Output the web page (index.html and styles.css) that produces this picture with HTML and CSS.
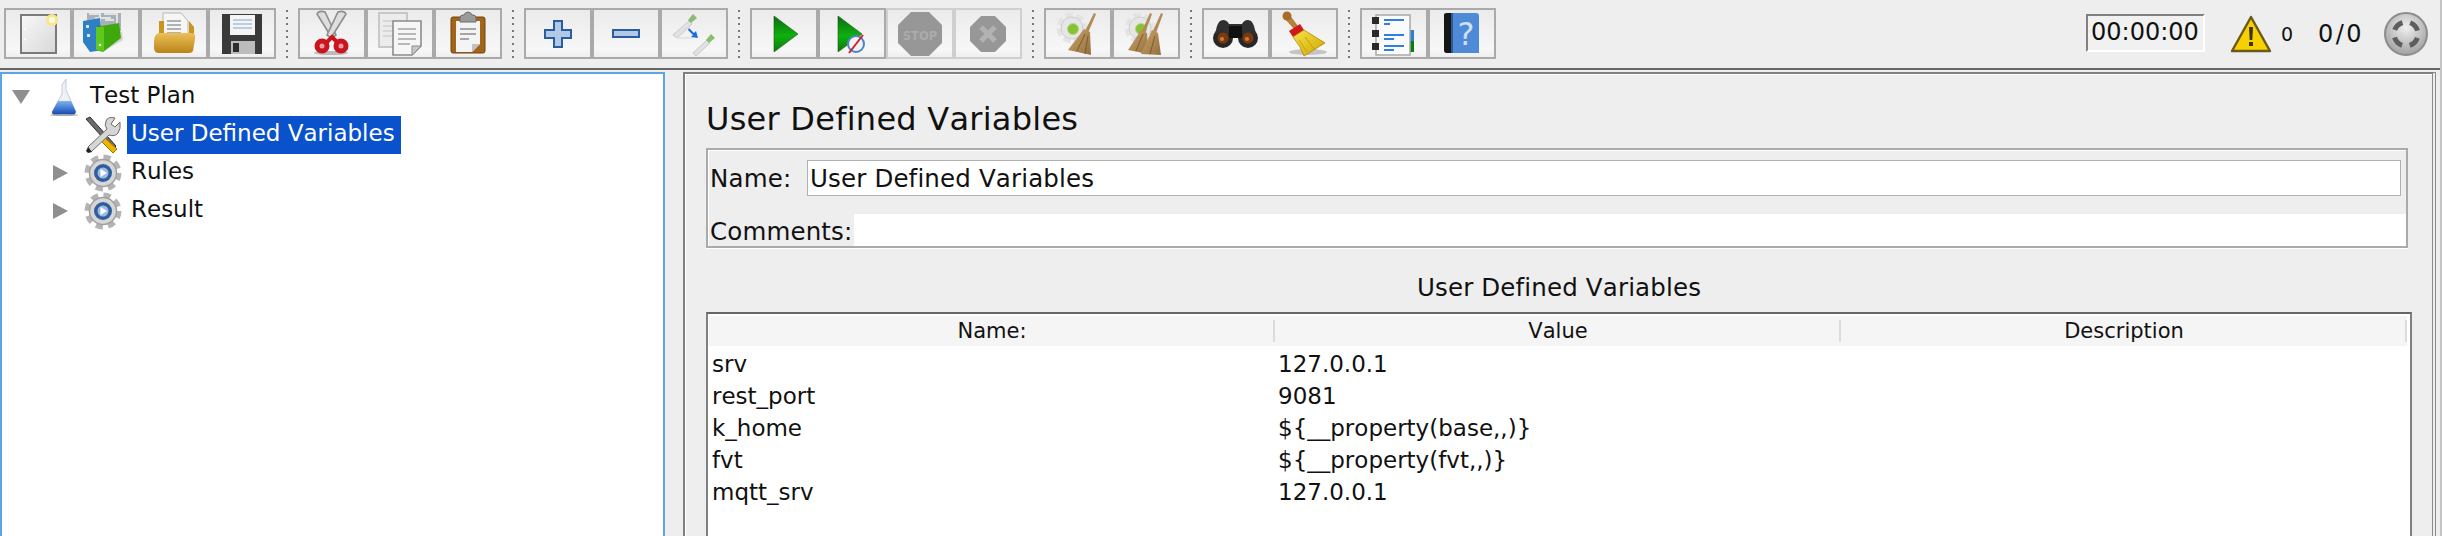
FILE: index.html
```html
<!DOCTYPE html>
<html lang="en">
<head>
<meta charset="utf-8">
<title>User Defined Variables</title>
<link rel="stylesheet" href="styles.css">
</head>
<body>
<svg class="defs" width="0" height="0" aria-hidden="true">
  <defs>
    <linearGradient id="gPage" x1="0" y1="0" x2="1" y2="1"><stop offset="0" stop-color="#f8f8f8"/><stop offset="1" stop-color="#d8d8d8"/></linearGradient>
    <linearGradient id="gFolder" x1="0" y1="0" x2="0" y2="1"><stop offset="0" stop-color="#eebf58"/><stop offset="1" stop-color="#b98518"/></linearGradient>
    <linearGradient id="gPlay" x1="0" y1="0" x2="0" y2="1"><stop offset="0" stop-color="#0c6a10"/><stop offset=".55" stop-color="#10b010"/><stop offset="1" stop-color="#0a7a0a"/></linearGradient>
    <linearGradient id="gBroom" x1="0" y1="0" x2="1" y2="1"><stop offset="0" stop-color="#c9a46e"/><stop offset="1" stop-color="#96703c"/></linearGradient>
    <linearGradient id="gYellow" x1="0" y1="0" x2="1" y2="1"><stop offset="0" stop-color="#f6e34a"/><stop offset="1" stop-color="#cfa500"/></linearGradient>
    <radialGradient id="gOrb" cx=".5" cy=".35" r=".7"><stop offset="0" stop-color="#f0f0f0"/><stop offset="1" stop-color="#9a9a9a"/></radialGradient>
    <linearGradient id="gFlask" x1="0" y1="0" x2="0" y2="1"><stop offset="0" stop-color="#7fb2ee"/><stop offset="1" stop-color="#0d46b4"/></linearGradient>
    <symbol id="gear" viewBox="0 0 38 38">
      <circle cx="19" cy="19" r="15.5" fill="none" stroke="#b4b4b4" stroke-width="6" stroke-dasharray="7 5.17"/>
      <circle cx="19" cy="19" r="13.5" fill="#d6d6d6" stroke="#a0a0a0" stroke-width="1.5"/>
      <circle cx="19" cy="19" r="9" fill="#2f5e9e"/>
      <circle cx="19" cy="19" r="5.5" fill="#9dbbe0"/>
      <path d="M16.5 15v8l6.5-4z" fill="#fff"/>
    </symbol>
    <symbol id="wgear" viewBox="0 0 32 32">
      <circle cx="16" cy="16" r="12.5" fill="none" stroke="#e4e4e4" stroke-width="6" stroke-dasharray="7 3.47"/>
      <circle cx="16" cy="16" r="11" fill="#e6e6e6" stroke="#cfcfcf"/>
      <circle cx="17" cy="17" r="5.5" fill="#86c232" stroke="#b6d68a"/>
    </symbol>
  </defs>
</svg>

<header class="toolbar">
  <div class="group">
    <button class="tb"><svg viewBox="0 0 64 47"><rect x="15" y="5" width="35" height="38" fill="url(#gPage)" stroke="#7a7a7a" stroke-width="2"/><circle cx="46" cy="10" r="6" fill="#f4e88a"/><circle cx="46" cy="10" r="3" fill="#fffbe0"/><circle cx="19" cy="19" r="1" fill="#fff"/><circle cx="19" cy="29" r="1" fill="#fff"/></svg></button>
    <button class="tb"><svg viewBox="0 0 64 47"><path d="M13 3h34v18H13z" fill="#a8b0b8"/><path d="M15 4h11v11M30 4h13v11M21 8h16M17 10h8M31 10h9" fill="none" stroke="#dfe3e6" stroke-width="2"/><path d="M9 11l17-3 3 32-13 2-7-10z" fill="#2e7fc4"/><path d="M12 15l3 0 0 3-3 0zM13 24l3 0 0 3-3 0z" fill="#cfe5f8"/><path d="M23 15l7 26 19-11-1-8z" fill="#222" opacity=".15"/><path d="M22 17l23-4 2 15-18 14-7-2z" fill="#3fa80c"/><path d="M22 17l8 0 0 24-8-1z" fill="#5ec81e"/><circle cx="26" cy="35" r="1.3" fill="#fff"/></svg></button>
    <button class="tb"><svg viewBox="0 0 64 47"><path d="M21 3h18l7 8v18H21z" fill="#f6f6f6" stroke="#b6b6b6"/><path d="M25 11h14M25 15h14M25 19h14M25 23h14" stroke="#9a9a9a" stroke-width="1.5"/><path d="M17 11h5v14h25V11l5 6v16H17z" fill="#c9951e"/><path d="M12 32q0-9 6-9h32q4 0 3 6l-2 12q-1 2-4 2H17q-5 0-5-5z" fill="url(#gFolder)"/></svg></button>
    <button class="tb"><svg viewBox="0 0 64 47"><path d="M12 4h40v40H12z" fill="#3a3a3a"/><rect x="20" y="5" width="25" height="20" fill="#f4f4f4"/><path d="M23 10h19M23 14h19M23 18h19" stroke="#a8c0da" stroke-width="1.6"/><rect x="21" y="31" width="24" height="13" fill="#bcbcbc"/><rect x="23" y="33" width="6" height="9" fill="#2d2d2d"/></svg></button>
  </div>
  <div class="sep"></div>
  <div class="group">
    <button class="tb"><svg viewBox="0 0 64 47"><ellipse cx="31" cy="43" rx="17" ry="2" fill="#bbb"/><path d="M17 4l15 24 4-3L25 2q-6-2-8 2z" fill="#dedede" stroke="#8e8e8e" stroke-width="1.6"/><path d="M46 4L31 28l-4-3L38 2q6-2 8 2z" fill="#dedede" stroke="#8e8e8e" stroke-width="1.6"/><path d="M26 33l6-6 6 6" fill="none" stroke="#cc141e" stroke-width="4"/><circle cx="22" cy="36" r="7.5" fill="#cc141e"/><circle cx="41" cy="36" r="7.5" fill="#cc141e"/><circle cx="22" cy="36" r="2.5" fill="#e3a0a4"/><circle cx="41" cy="36" r="2.5" fill="#e3a0a4"/></svg></button>
    <button class="tb"><svg viewBox="0 0 64 47"><rect x="11" y="3" width="28" height="34" fill="#ececec" stroke="#bcbcbc" stroke-width="1.5"/><path d="M15 11h18M15 16h18M15 21h18M15 26h18" stroke="#cfcfcf" stroke-width="1.5"/><path d="M25 11h28v25l-9 9H25z" fill="#f6f6f6" stroke="#8c8c8c" stroke-width="1.6"/><path d="M53 36h-9v9z" fill="#c8c8c8" stroke="#8c8c8c"/><path d="M30 19h18M30 24h18M30 29h18M30 34h12" stroke="#a4a4a4" stroke-width="1.5"/></svg></button>
    <button class="tb"><svg viewBox="0 0 64 47"><rect x="15" y="7" width="34" height="36" rx="2" fill="#a46418" stroke="#6e4410"/><path d="M20 11h24v23l-8 8H20z" fill="#f4f4f4"/><path d="M44 34h-8v8z" fill="#c2c2c2"/><path d="M24 19h16M24 24h16M24 29h9" stroke="#8c8c8c" stroke-width="1.5"/><path d="M24 12V8q0-3 3-3h1q1-3 4-3t4 3h1q3 0 3 3v4z" fill="#9a9a9a" stroke="#6c6c6c"/></svg></button>
  </div>
  <div class="sep"></div>
  <div class="group">
    <button class="tb"><svg viewBox="0 0 64 47"><path d="M28 11h8v9h9v8h-9v9h-8v-9h-9v-8h9z" fill="#b0c9e6" stroke="#2a5c9e" stroke-width="2"/></svg></button>
    <button class="tb"><svg viewBox="0 0 64 47"><rect x="19" y="20" width="26" height="7" fill="#b0c9e6" stroke="#2a5c9e" stroke-width="2"/></svg></button>
    <button class="tb"><svg viewBox="0 0 64 47"><path d="M11 25l16-14 3 3-15 14z" fill="#e2e2e2" stroke="#c8c8c8"/><path d="M26 10l5-6 4 4-6 5z" fill="#8cbc70"/><path d="M31 43l14-13 3 3-14 13z" fill="#e2e2e2" stroke="#c8c8c8"/><path d="M44 30l5-6 4 4-6 5z" fill="#8cbc70"/><path d="M15 28h16" stroke="#e0e0e0" stroke-width="1.5"/><path d="M27 18l5 5 2-2 2 7-7-1 2-2-5-5z" fill="#1c6ae0"/></svg></button>
  </div>
  <div class="sep"></div>
  <div class="group">
    <button class="tb"><svg viewBox="0 0 64 47"><path d="M22 6l24 18-24 18z" fill="url(#gPlay)" stroke="#0d5a10" stroke-width=".6"/></svg></button>
    <button class="tb"><svg viewBox="0 0 64 47"><path d="M18 6l24 18-24 18z" fill="url(#gPlay)" stroke="#0d5a10" stroke-width=".6"/><circle cx="36" cy="34" r="8" fill="#f2f2f2" stroke="#4c86c8" stroke-width="2"/><path d="M29 43l14-18" stroke="#d0202e" stroke-width="2"/></svg></button>
    <button class="tb off"><svg viewBox="0 0 64 47"><path d="M23 2h18l13 13v18L41 46H23L10 33V15z" fill="#979797"/><text x="32" y="30" class="stop-text">STOP</text></svg></button>
    <button class="tb off"><svg viewBox="0 0 64 47"><path d="M25 6h14l11 11v14L39 42H25L14 31V17z" fill="#979797"/><path d="M25 17l14 14M39 17L25 31" stroke="#b2b2b2" stroke-width="5"/></svg></button>
  </div>
  <div class="sep"></div>
  <div class="group">
    <button class="tb"><svg viewBox="0 0 64 47"><use href="#wgear" x="10" y="2" width="32" height="32"/><path d="M48 3l2 1-8 19-3-2z" fill="#b08a58"/><path d="M38 19l6 3 1 23-23-5z" fill="url(#gBroom)"/><path d="M39 24l-8 17M42 26l-3 18" stroke="#7a5a30" stroke-width="1"/></svg></button>
    <button class="tb"><svg viewBox="0 0 64 47"><use href="#wgear" x="10" y="2" width="32" height="32"/><path d="M36 3l2 1-7 19-3-2z" fill="#b08a58"/><path d="M47 3l2 1-7 19-3-2z" fill="#b08a58"/><path d="M27 20l6 3 1 21-20-4z" fill="url(#gBroom)"/><path d="M38 20l6 3 3 22-20-1z" fill="url(#gBroom)"/><path d="M29 24l-7 17M41 26l-5 18" stroke="#7a5a30" stroke-width="1"/></svg></button>
  </div>
  <div class="sep"></div>
  <div class="group">
    <button class="tb"><svg viewBox="0 0 64 47"><circle cx="19" cy="28" r="10" fill="#272727"/><circle cx="44" cy="28" r="10" fill="#272727"/><path d="M13 16q2-6 6-6t6 4h13q2-4 6-4t6 6l2 8H11z" fill="#303030"/><path d="M25 16h13v12H25z" fill="#111"/><circle cx="19" cy="28" r="5.5" fill="#7a3a10"/><circle cx="44" cy="28" r="5.5" fill="#7a3a10"/><circle cx="18" cy="29" r="2" fill="#d27a2a"/><circle cx="43" cy="29" r="2" fill="#d27a2a"/></svg></button>
    <button class="tb"><svg viewBox="0 0 64 47"><ellipse cx="36" cy="42" rx="19" ry="3" fill="#c4c4c4"/><path d="M12 8l5-4 9 12-4 3z" fill="#b8803a"/><circle cx="15" cy="6" r="4.5" fill="#a86c28"/><path d="M17 21l11-7 4 6-11 7z" fill="#d01818"/><path d="M21 27l11-7 21 13-21 13-4-9z" fill="url(#gYellow)" stroke="#b08a00" stroke-width=".8"/><path d="M27 30l8 12M33 27l10 13" stroke="#c7a200"/></svg></button>
  </div>
  <div class="sep"></div>
  <div class="group">
    <button class="tb"><svg viewBox="0 0 64 47"><rect x="46" y="20" width="6" height="11" fill="#2f7fd0"/><rect x="46" y="31" width="6" height="11" fill="#0e7a10"/><rect x="14" y="5" width="34" height="40" fill="#fafafa" stroke="#a8a8a8" stroke-width="1.5"/><path d="M10 7h7v7h-7zM10 20h7v7h-7zM10 33h7v7h-7z" fill="#2a2a2a"/><path d="M22 10h20M22 25h20M22 36h20" stroke="#2f7fe0" stroke-width="2"/><path d="M22 14h6M22 29h10M22 40h10" stroke="#2f7fe0" stroke-width="2"/></svg></button>
    <button class="tb"><svg viewBox="0 0 64 47"><path d="M14 6q0-3 3-3h29q3 0 3 3v37H17q-3 0-3-3z" fill="#4f8ad8"/><path d="M14 5q0-2 3-2h5v40h-5q-3 0-3-3z" fill="#161616"/><path d="M22 3v40" stroke="#2c5a98" stroke-width="2"/><text x="36" y="35" class="help-text">?</text></svg></button>
  </div>

  <div class="status">
    <div class="timer">00:00:00</div>
    <svg class="warn" viewBox="0 0 42 38"><path d="M21 2l19 34H2z" fill="#f6d000" stroke="#6a5a18" stroke-width="2.4" stroke-linejoin="round"/><path d="M19 12h4l-.7 13h-2.6z" fill="#3a3212"/><rect x="19" y="27" width="4" height="4" fill="#3a3212"/></svg>
    <span class="warn-count">0</span>
    <span class="threads">0/0</span>
    <svg class="orb" viewBox="0 0 44 44"><circle cx="22" cy="22" r="21" fill="url(#gOrb)" stroke="#8c8c8c" stroke-width="2"/><circle cx="22" cy="22" r="12" fill="none" stroke="#5e5e5e" stroke-width="5" stroke-dasharray="11 7.85" stroke-dashoffset="-3.92"/></svg>
  </div>
</header>

<main class="main">
  <nav class="tree">
    <div class="node">
      <span class="twist twist-open"></span>
      <svg class="flask" viewBox="0 0 28 38"><path d="M16 1v11l10 22H2l10-18V7z" fill="#eef1f6" stroke="#c4ccd8"/><path d="M8 23h13l5 11q-1 3-3 3H5q-3 0-3-3z" fill="url(#gFlask)"/><ellipse cx="14" cy="37" rx="14" ry="1" fill="#a8a8a8"/></svg>
      <span class="label label-root">Test Plan</span>
    </div>
    <div class="node node-child">
      <svg class="nicon" viewBox="0 0 38 38"><path d="M2 3l4-2 26 29-3 3z" fill="#6c6c6c" stroke="#2c2c2c"/><path d="M21 22l12 11 -4 4-12-12z" fill="#efb400" stroke="#9a7400"/><path d="M36 6l-5 5-4-3 4-6q-7-2-9 3t1 8L4 31l3 5 18-17q6 2 9-2t2-11z" fill="#d6d6d6" stroke="#6c6c6c"/><path d="M4 31l4 5-4 1-2-2z" fill="#222"/></svg>
      <span class="label label-selected">User Defined Variables</span>
    </div>
    <div class="node node-branch">
      <span class="twist twist-closed"></span>
      <svg class="nicon" viewBox="0 0 38 38"><use href="#gear" width="38" height="38"/></svg>
      <span class="label">Rules</span>
    </div>
    <div class="node node-branch">
      <span class="twist twist-closed"></span>
      <svg class="nicon" viewBox="0 0 38 38"><use href="#gear" width="38" height="38"/></svg>
      <span class="label">Result</span>
    </div>
  </nav>

  <section class="panel">
    <h1 class="title">User Defined Variables</h1>
    <div class="form">
      <div class="row row-name">
        <span class="lab lab-name">Name:</span>
        <div class="field">User Defined Variables</div>
      </div>
      <div class="row row-comments">
        <span class="lab lab-comments">Comments:</span>
        <div class="area"></div>
      </div>
    </div>
    <h2 class="table-title">User Defined Variables</h2>
    <div class="table-box">
      <table class="vars">
        <thead>
          <tr><th>Name:</th><th>Value</th><th>Description</th></tr>
        </thead>
        <tbody>
          <tr><td>srv</td><td>127.0.0.1</td><td></td></tr>
          <tr><td>rest_port</td><td>9081</td><td></td></tr>
          <tr><td>k_home</td><td>${__property(base,,)}</td><td></td></tr>
          <tr><td>fvt</td><td>${__property(fvt,,)}</td><td></td></tr>
          <tr><td>mqtt_srv</td><td>127.0.0.1</td><td></td></tr>
        </tbody>
      </table>
    </div>
  </section>
</main>
</body>
</html>
```
FILE: styles.css
```css
* { box-sizing: border-box; }
html, body { margin: 0; padding: 0; }
body {
  width: 2442px;
  height: 536px;
  overflow: hidden;
  background: #eeeeee;
  border-right: 2px solid #c4c4c4;
  color: #111;
  font-family: "DejaVu Sans", sans-serif;
  font-kerning: none;
}
.defs { position: absolute; }

.toolbar {
  display: flex;
  align-items: flex-start;
  height: 70px;
  padding: 8px 2px 0 4px;
  border-bottom: 2px solid #666;
}
.group { display: flex; }
.tb {
  display: block;
  width: 68px;
  height: 51px;
  padding: 0;
  border: 2px solid #aaa;
  background: linear-gradient(#ebebeb, #f7f7f7 85%, #eee);
}
.tb svg { display: block; width: 64px; height: 47px; }
.tb.off { border-color: #cfcfcf; }
.sep {
  width: 22px;
  height: 51px;
  background: repeating-linear-gradient(#777 0 2px, transparent 2px 6.6px) 10px 2px / 2px 50px no-repeat;
}
.stop-text {
  font: bold 11.5px "DejaVu Sans", sans-serif;
  fill: #ababab;
  text-anchor: middle;
}
.help-text {
  font: 32px "DejaVu Sans", sans-serif;
  fill: #cfe0f5;
  text-anchor: middle;
}

.status {
  display: flex;
  align-items: flex-start;
  height: 52px;
  margin-left: auto;
  margin-top: -8px;
  padding-right: 10px;
}
.timer {
  width: 119px;
  height: 38px;
  margin-top: 14px;
  padding-left: 3px;
  border: 2px solid;
  border-color: #808080 #fff #fff #808080;
  background: #f1f1f1;
  font-size: 24px;
  line-height: 32px;
}
.warn { width: 42px; height: 38px; margin: 15px 0 0 25px; }
.warn-count { width: 13px; margin: 22px 0 0 9px; font-size: 19px; line-height: 24px; }
.threads { width: 44px; margin: 20px 0 0 24px; font-size: 24px; line-height: 28px; letter-spacing: 2.5px; }
.orb { width: 44px; height: 44px; margin: 12px 0 0 22px; }

.main {
  display: flex;
  align-items: stretch;
  height: 464px;
  margin-top: 2px;
}
.tree {
  width: 665px;
  padding-top: 4px;
  background: #fff;
  border: 2px solid #5aa5e6;
  border-bottom: 0;
}
.node {
  display: flex;
  align-items: center;
  height: 38px;
}
.twist { width: 0; height: 0; border-style: solid; border-color: transparent; }
.twist-open {
  margin-left: 10px;
  border-width: 14px 9px 0;
  border-top-color: #8f8f8f;
}
.twist-closed {
  margin-left: 51px;
  border-width: 8px 0 8px 15px;
  border-left-color: #8f8f8f;
}
.flask { width: 28px; height: 38px; margin-left: 20px; }
.nicon { width: 38px; height: 38px; }
.node-child .nicon { margin-left: 82px; }
.node-branch .nicon { margin-left: 16px; }
.label {
  padding: 0 6px 3px 4px;
  margin-left: 5px;
  font-size: 23px;
  line-height: 35px;
  white-space: nowrap;
}
.label-root { margin-left: 8px; }
.label-selected { background: #0a52cc; color: #fff; }

.panel {
  width: 1753px;
  margin-left: 18px;
  padding-left: 21px;
  border-left: 2px solid #808080;
  border-top: 2px solid #808080;
  border-right: 4px double #8c8c8c;
  box-shadow: inset 1px 1px 0 #fff;
}
.title {
  margin: 25px 0 9px;
  font-size: 32px;
  font-weight: normal;
  line-height: 40px;
  letter-spacing: .25px;
}
.form {
  width: 1702px;
  height: 100px;
  padding: 10px 0 0 2px;
  border: 2px solid #aaa;
  box-shadow: 0 1px 0 #fff, inset 1px 1px 0 #fff;
}
.row { display: flex; font-size: 24.5px; letter-spacing: .15px; }
.row-name { height: 36px; margin-right: 5px; }
.row-comments { height: 32px; margin-top: 18px; }
.lab { flex: none; }
.row-name .lab { line-height: 38px; }
.row-comments .lab { line-height: 36px; }
.lab-name { width: 97px; }
.lab-comments { width: 144px; }
.field {
  flex: 1;
  padding-left: 2px;
  border: 1px solid #b0b0b0;
  background: #fff;
  line-height: 36px;
}
.area { flex: 1; background: #fff; }
.table-title {
  margin: 25px 0 9px;
  width: 1706px;
  font-size: 24.5px;
  font-weight: normal;
  line-height: 30px;
  letter-spacing: .15px;
  text-align: center;
}
.table-box {
  width: 1706px;
  height: 230px;
  padding: 2px 0 0 1px;
  border: 2px solid #808080;
  border-top-color: #666;
  border-bottom: 0;
  background: #fff;
}
.vars {
  width: 1698px;
  border-collapse: collapse;
  table-layout: fixed;
  font-size: 23px;
}
.vars th {
  height: 30px;
  padding: 0;
  font-weight: normal;
  font-size: 21px;
  background: linear-gradient(#dcdcdc, #dcdcdc) right 4px / 2px 22px no-repeat, #f5f5f5;
}
.vars td {
  height: 32px;
  padding: 3px 0 0 3px;
  white-space: nowrap;
}
```
